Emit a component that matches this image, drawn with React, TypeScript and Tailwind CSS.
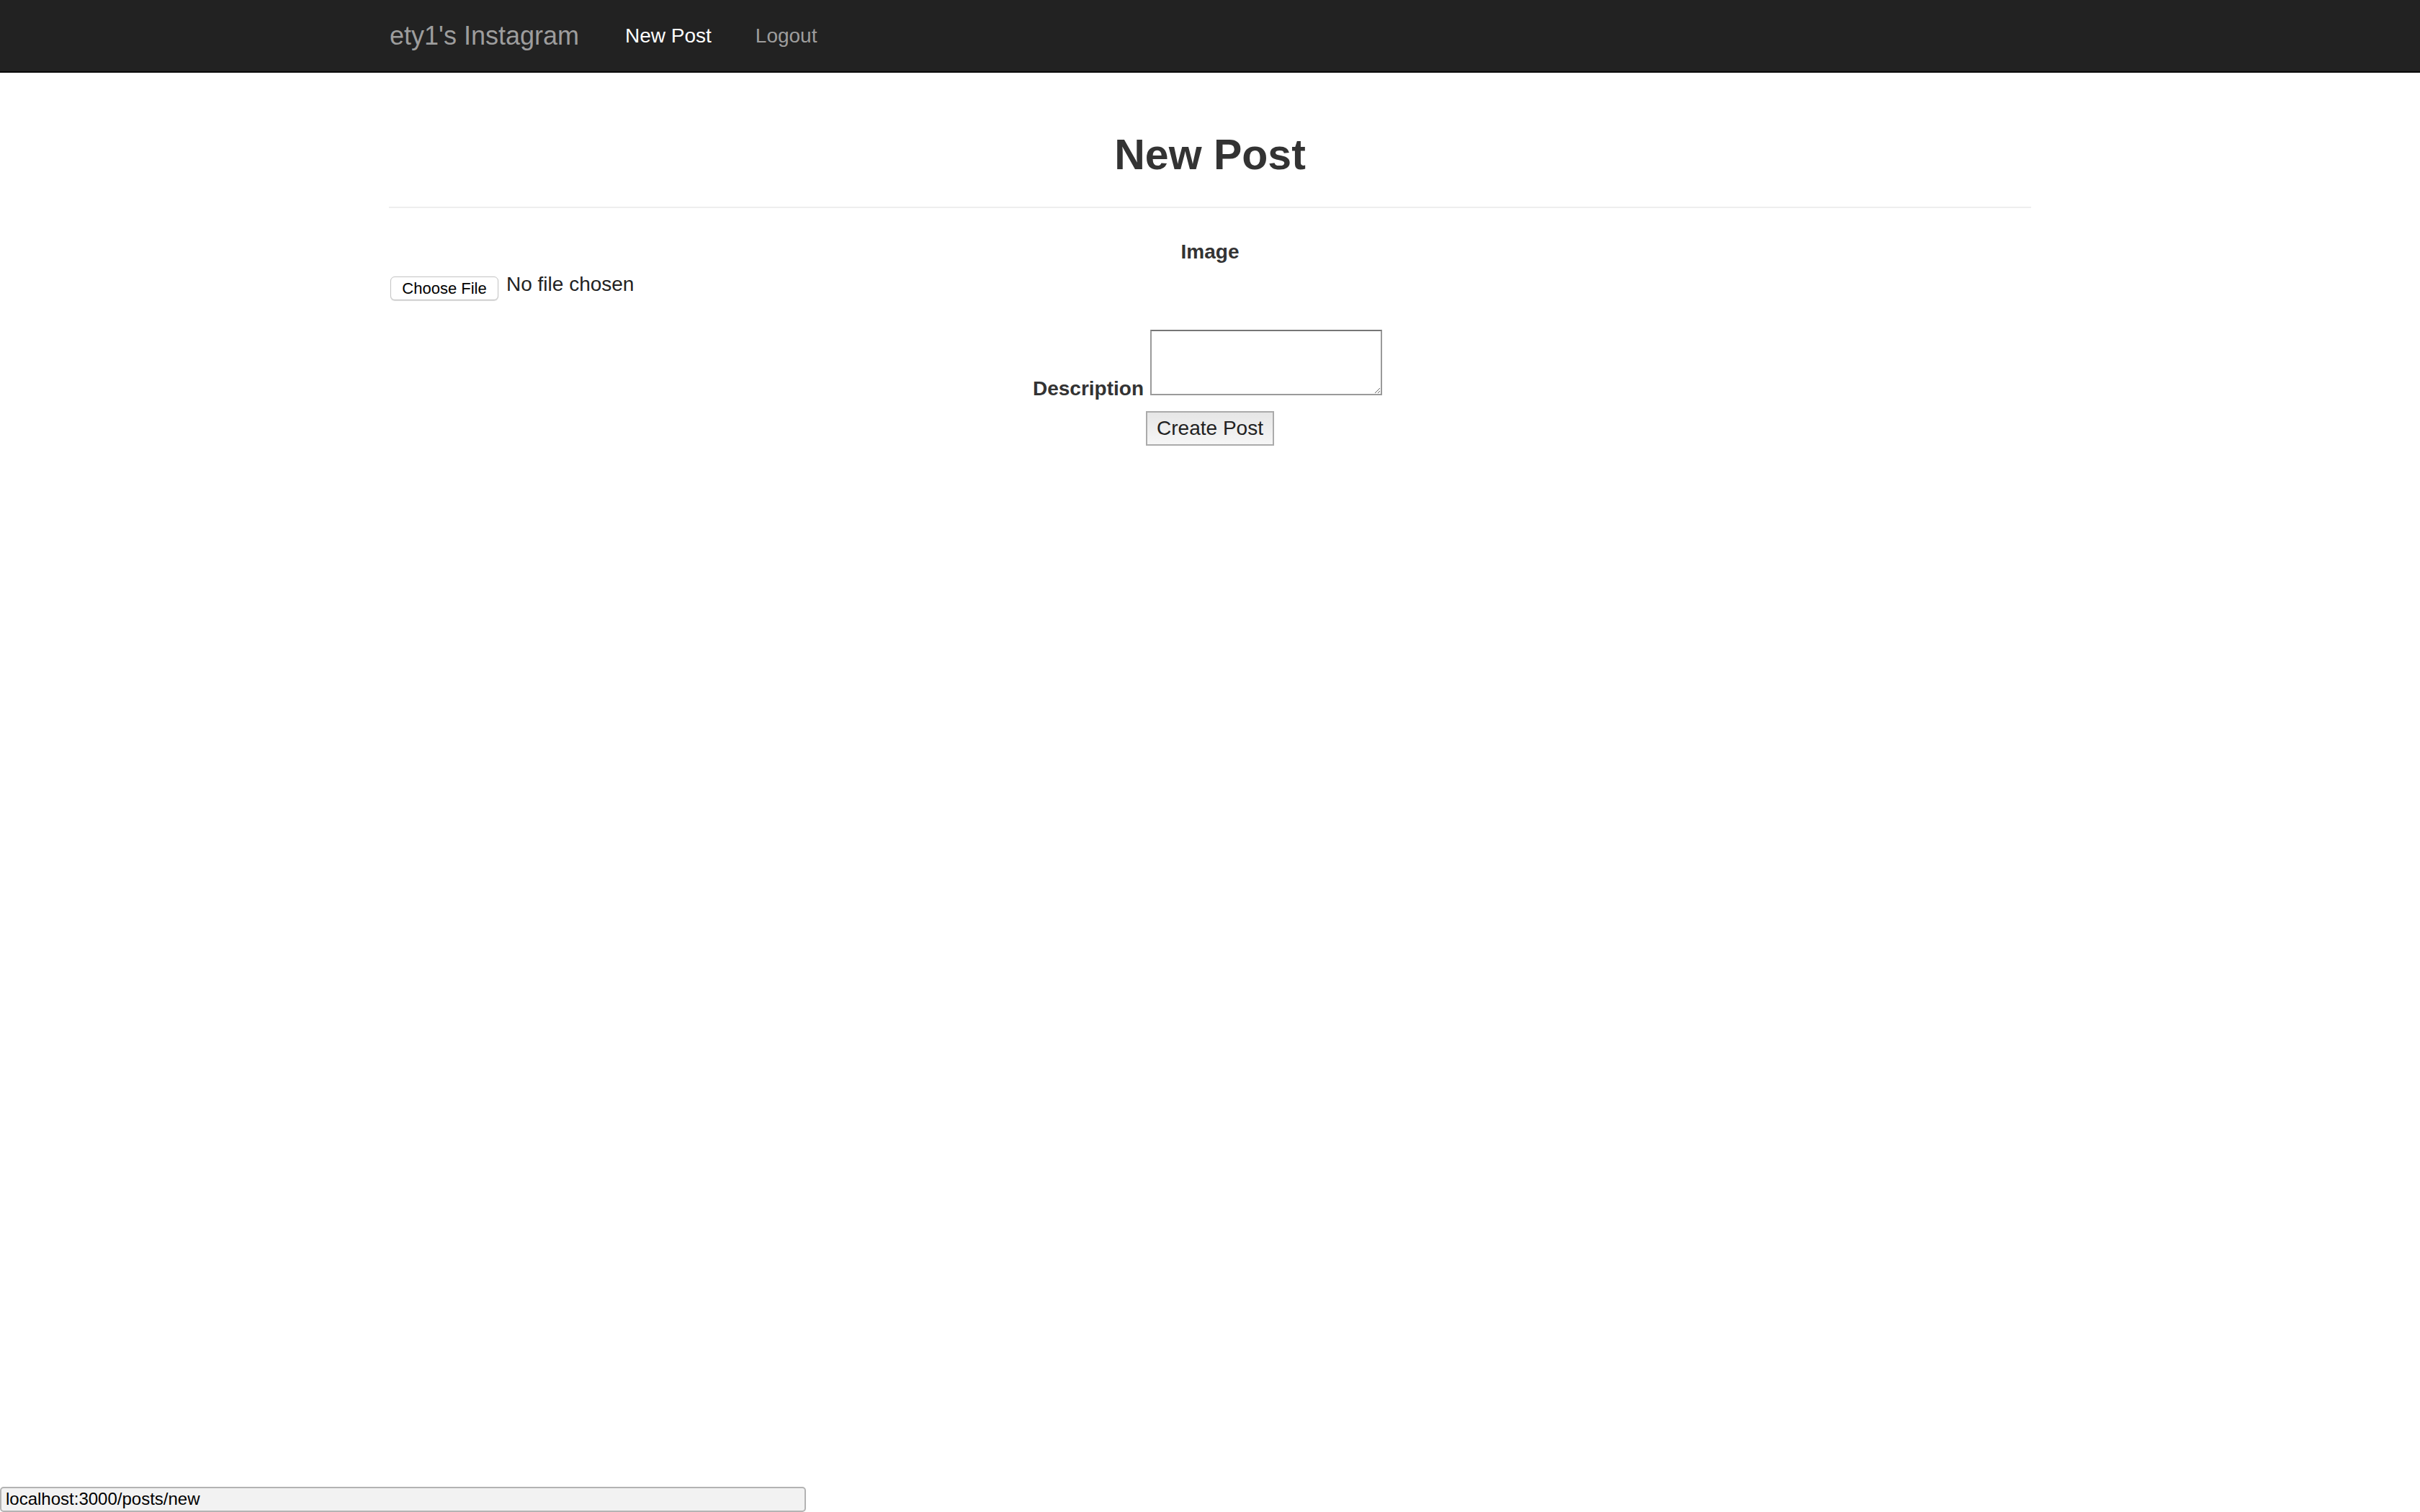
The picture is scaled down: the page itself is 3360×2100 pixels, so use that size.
import React from 'react';

const font = "font-['Liberation_Sans',Arial,sans-serif]";

const Navbar: React.FC = () => {
  return (
    <nav className="h-[101px] bg-[#222222] border-b-2 border-[#080808]">
      <div className="w-[2280px] mx-auto h-full flex items-center">
        <a className="pl-[1px] text-[36px] leading-[40px] text-[#9d9d9d]">ety1's Instagram</a>
        <a className="ml-[64px] text-[28px] leading-[40px] text-white">New Post</a>
        <a className="ml-[61px] text-[28px] leading-[40px] text-[#9d9d9d]">Logout</a>
      </div>
    </nav>
  );
};

const NewPostForm: React.FC = () => {
  return (
    <div className="w-[2280px] mx-auto text-[#333333]">
      <div className="mt-[82px] pb-[39px] border-b-2 border-[#eeeeee]">
        <h1 className="text-center text-[59px] leading-[65px] font-bold">New Post</h1>
      </div>

      {/* image field */}
      <div className="mt-[41px] text-center text-[28px] leading-[40px] font-bold">Image</div>
      <div className="mt-[9px] flex items-start">
        <span className="ml-[2px] mt-[5px] w-[150px] h-[33px] flex items-center justify-center rounded-[6px] border border-[#c4c4c4] bg-white shadow-[0_1px_1px_rgba(0,0,0,0.15)] text-[22px] text-black">
          Choose File
        </span>
        <span className="ml-[11px] text-[28px] leading-[32px] text-[#222222]">No file chosen</span>
      </div>

      {/* description field */}
      <div className="mt-[41px] flex justify-center items-end gap-[9px] pr-[7px]">
        <label className="text-[28px] leading-[18px] font-bold">Description</label>
        <textarea
          className="block w-[322px] h-[91px] border-2 border-[#9a9a9a] border-t-[#767676] bg-white"
          readOnly
        />
      </div>
      <div className="mt-[22px] flex justify-center">
        <button className="w-[178px] h-[48px] flex items-center justify-center border-2 border-[#ababab] bg-gradient-to-b from-[#e6e6e6] to-[#f6f6f6] text-[28px] leading-[32px] text-[#222222]">
          Create Post
        </button>
      </div>
    </div>
  );
};

const App: React.FC = () => {
  return (
    <div className={`relative min-h-screen bg-white ${font}`}>
      <Navbar />
      <NewPostForm />
      <div className="fixed bottom-0 left-0 w-[1119px] h-[35px] bg-[#f2f2f2] border-2 border-[#b3b3b3] rounded-[5px] pl-[6px] text-[24px] leading-[30px] text-black">
        localhost:3000/posts/new
      </div>
    </div>
  );
};

export default App;
